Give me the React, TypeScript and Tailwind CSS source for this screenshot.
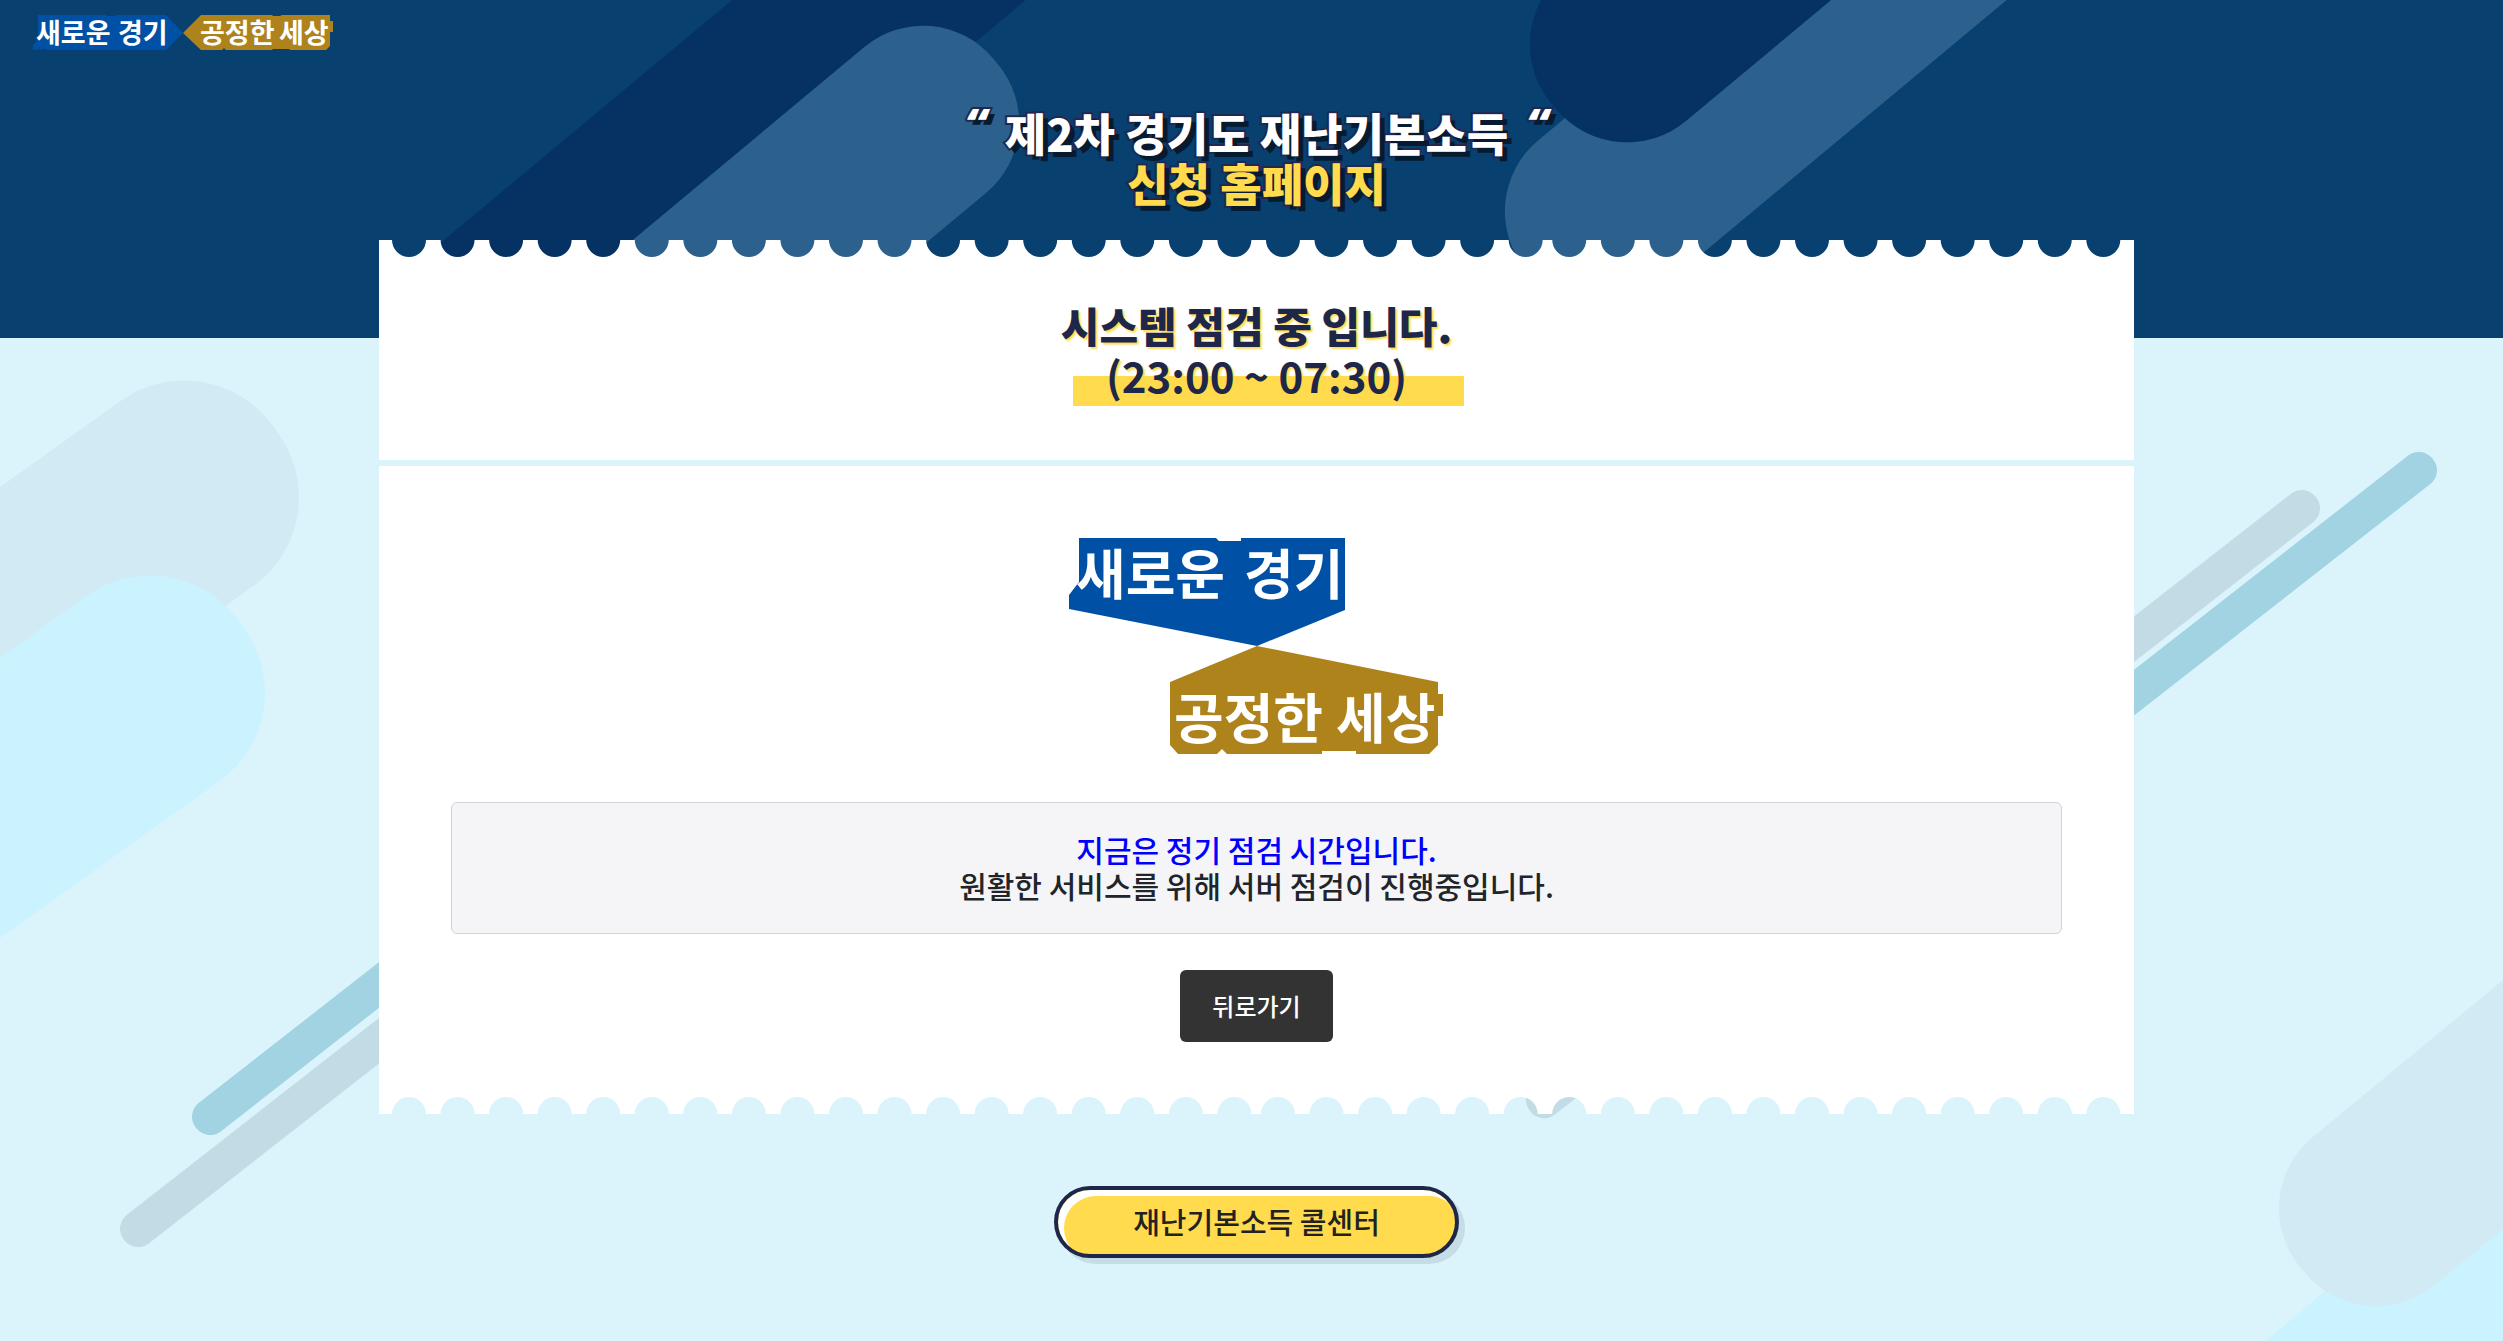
type PillProps = {
    x: number;
    y: number;
    r: number;
    angle: number;
    length?: number;
    fill: string;
};

// bar with rounded ends: (x, y) is the centre of its near end, angle is where the body runs to
const Pill = ({ x, y, r, angle, length = 900, fill }: PillProps) => (
    <rect
        x={-r * 0.98}
        y={-r}
        width={length + r * 1.96}
        height={r * 2}
        rx={r * 0.96}
        fill={fill}
        transform={`translate(${x} ${y}) rotate(${angle})`}
    />
);

const Backdrop = () => (
    <svg
        aria-hidden="true"
        className="absolute inset-0 h-full w-full"
        viewBox="0 0 2503 1341"
        preserveAspectRatio="xMidYMin slice"
    >
        <defs>
            <clipPath id="banner">
                <rect width="2503" height="338" />
            </clipPath>
        </defs>
        <Pill x={185} y={495} r={114} angle={144.4} fill="#d2eaf4" />
        <Pill x={151} y={690} r={114} angle={144.4} fill="#caf3ff" />
        <Pill x={210} y={1117} r={18} angle={-38} fill="#a1d3e2" />
        <Pill x={138} y={1229} r={18} angle={-38} fill="#c3dbe5" />
        <Pill x={2302} y={508} r={18} angle={142} length={962} fill="#c3dbe5" />
        <Pill x={2419} y={470} r={18} angle={142} fill="#a1d3e2" />
        <polygon points="2266,1341 2503,1140 2503,1341" fill="#caf3ff" />
        <Pill x={2375} y={1210} r={96} angle={-39.5} fill="#d2eaf4" />
        <g clipPath="url(#banner)">
            <rect width="2503" height="338" fill="#084070" />
            <Pill x={478} y={334} r={94} angle={-39.8} fill="#053262" />
            <Pill x={924} y={121} r={95} angle={140.2} fill="#2c618e" />
            <Pill x={1601} y={213} r={96} angle={-39.8} fill="#2c618e" />
            <Pill x={1626} y={46} r={96} angle={-39.8} fill="#053262" />
        </g>
    </svg>
);

// ticket edge: the bites keep a steady pitch except for one narrower gap after `split` of them
const BITES = 36;

const TicketEdge = ({ split, flip }: { split: number; flip?: boolean }) => {
    let d = "M0 17V0";
    for (let i = 0; i < BITES; i++) {
        const centre = 30 + i * 48.55 - (i >= split ? 5 : 0);
        d += `H${centre - 17}a17 17 0 0 0 34 0`;
    }
    d += "H1755V17Z";

    return (
        <svg
            aria-hidden="true"
            className={`block h-[17px] w-full ${flip ? "-scale-y-100" : ""}`}
            viewBox="0 0 1755 17"
            preserveAspectRatio="none"
        >
            <path d={d} fill="#fff" />
        </svg>
    );
};

const SmallLogo = () => (
    <svg
        className="h-9 w-[300px] overflow-visible"
        viewBox="0 0 300 36"
        role="img"
        aria-label="새로운 경기 공정한 세상"
    >
        <polygon points="5,0 73,0 73,1 83,1 83,0 133,0 150,18 133,35 13,35 13,34 0,35 0,30 5,24" fill="#0051a5" />
        <polygon
            points="150,18 168,0 239,0 240,1 247,1 249,0 297,0 297,6 300,6 300,17 297,17 297,31 293,35 257,35 256,34 240,34 239,35 193,35 191,33 189,35 168,35"
            fill="#ae831c"
        />
        <g fill="#fff" fontSize="27" fontWeight="700">
            <text y="28">
                <tspan x="3">새로운</tspan>
                <tspan x="85">경기</tspan>
            </text>
            <text y="28">
                <tspan x="167">공정한</tspan>
                <tspan x="246">세상</tspan>
            </text>
        </g>
    </svg>
);

const BigLogo = () => (
    <svg
        className="h-[216px] w-[375px] overflow-visible"
        viewBox="0 0 375 216"
        role="img"
        aria-label="새로운 경기 공정한 세상"
    >
        <polygon points="10,0 147,0 150,3 172,3 172,0 276,0 276,72 188,108 0,71 0,57 10,44" fill="#0051a5" />
        <polygon
            points="188,108 369,144 369,156 374,156 374,178 369,178 369,207 360,216 287,216 287,213 253,213 253,216 158,216 153,211 148,216 109,216 101,207 101,144"
            fill="#ae831c"
        />
        <g fill="#fff" fontSize="54" fontWeight="700">
            <text y="57">
                <tspan x="7">새로운</tspan>
                <tspan x="175">경기</tspan>
            </text>
            <text y="201">
                <tspan x="105">공정한</tspan>
                <tspan x="267">세상</tspan>
            </text>
        </g>
    </svg>
);

const Quote = () => <span className="font-['Open_Sans'] leading-8 italic">“</span>;

const Title = () => (
    <h1 className="text-center text-[45px] leading-[50px] font-black text-white [-webkit-text-stroke:4px_#232850] [paint-order:stroke_fill] [text-shadow:5px_5px_0_#061a30]">
        <span className="flex items-start justify-center gap-[18px]">
            <Quote />
            <span>제2차 경기도 재난기본소득</span>
            <Quote />
        </span>
        <span className="block text-[#ffdb4d]">신청 홈페이지</span>
    </h1>
);

const App = () => {
    return (
        <div className="relative min-h-screen overflow-hidden bg-[#dbf4fc] font-['Noto_Sans_CJK_KR',sans-serif] text-[#212529]">
            <Backdrop />
            <div className="relative">
                <header className="flex h-[108px] items-start px-[33px] pt-[15px]">
                    <a href="#">
                        <SmallLogo />
                    </a>
                </header>

                <main className="flex flex-col items-center pl-[10px]">
                    <Title />

                    <div className="mt-8 w-[70.4%]">
                        <TicketEdge split={24} />
                        <section className="flex justify-center bg-white pt-[43px] pb-[60px]">
                            <h2 className="relative text-center text-[42px] leading-[50px] text-[#1e2749] [text-shadow:2px_2px_2px_#ffdb4d]">
                                <span className="absolute top-[76px] left-3 h-[30px] w-full bg-[#ffdb4d]" />
                                <span className="relative block font-black">시스템 점검 중 입니다.</span>
                                <span className="relative block font-bold">(23:00 ~ 07:30)</span>
                            </h2>
                        </section>
                        <div className="h-[6px] bg-[#dbf4fc]" />
                        <section className="flex flex-col items-center bg-white px-[72px] pt-[72px] pb-[55px]">
                            <BigLogo />
                            <div className="mt-12 w-full rounded-md border border-[#d0d3d8] bg-[#f5f5f8] pt-7 pb-[30px] text-center text-[30px] leading-9 font-medium">
                                <p className="text-[#0000ff]">지금은 정기 점검 시간입니다.</p>
                                <p>원활한 서비스를 위해 서버 점검이 진행중입니다.</p>
                            </div>
                            <button
                                type="button"
                                onClick={() => window.history.back()}
                                className="mt-9 h-[72px] cursor-pointer rounded-md bg-[#333] px-8 text-2xl font-medium text-white"
                            >
                                뒤로가기
                            </button>
                        </section>
                        <TicketEdge split={18} flip />
                    </div>

                    <a
                        href="#"
                        className="mt-[72px] mb-20 flex h-[72px] w-[405px] items-center justify-center rounded-full border-4 border-[#1e2749] bg-[#ffdb4d] text-[29px] font-medium text-[#222] shadow-[6px_6px_0_#c5dde5,inset_6px_6px_0_#fff]"
                    >
                        재난기본소득 콜센터
                    </a>
                </main>
            </div>
        </div>
    );
};

export default App;
